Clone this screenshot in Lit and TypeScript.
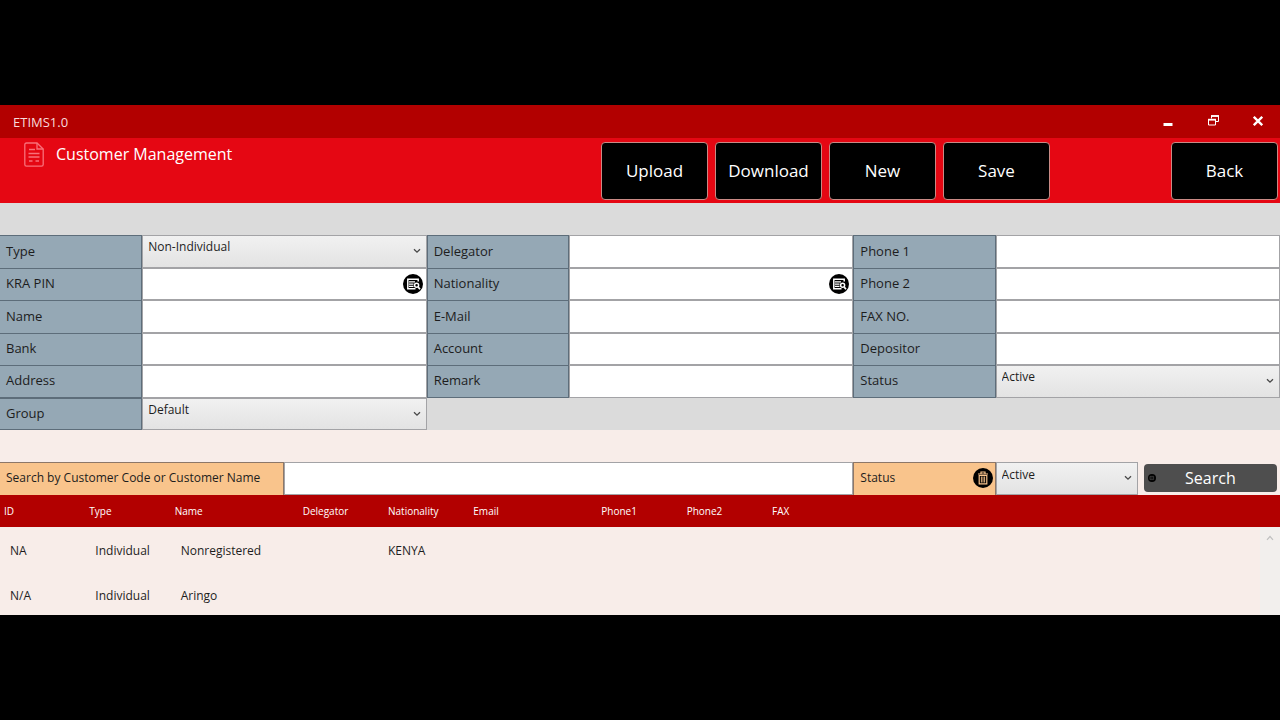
import { LitElement, html, css, nothing, type TemplateResult } from "lit";
import { customElement } from "lit/decorators.js";

interface Field {
  id: string;
  label: string;
  options?: string[];
  lookup?: boolean;
}

const FIELD_ROWS: Field[][] = [
  [
    { id: "type", label: "Type", options: ["Non-Individual", "Individual"] },
    { id: "delegator", label: "Delegator" },
    { id: "phone1", label: "Phone 1" },
  ],
  [
    { id: "pin", label: "KRA PIN", lookup: true },
    { id: "nationality", label: "Nationality", lookup: true },
    { id: "phone2", label: "Phone 2" },
  ],
  [
    { id: "name", label: "Name" },
    { id: "email", label: "E-Mail" },
    { id: "fax", label: "FAX NO." },
  ],
  [
    { id: "bank", label: "Bank" },
    { id: "account", label: "Account" },
    { id: "depositor", label: "Depositor" },
  ],
  [
    { id: "address", label: "Address" },
    { id: "remark", label: "Remark" },
    { id: "status", label: "Status", options: ["Active", "Inactive"] },
  ],
  [{ id: "group", label: "Group", options: ["Default"] }],
];

const COLUMNS = ["ID", "Type", "Name", "Delegator", "Nationality", "Email", "Phone1", "Phone2", "FAX"];
const CUSTOMERS = [
  ["NA", "Individual", "Nonregistered", "", "KENYA", "", "", "", ""],
  ["N/A", "Individual", "Aringo", "", "", "", "", "", ""],
];

const chevron = html`<svg class="chevron" viewBox="0 0 8 6" width="8" height="6" aria-hidden="true">
  <path d="M1 1.2 4 4.2 7 1.2" fill="none" stroke="#484848" stroke-width="1.3" />
</svg>`;

const lookupIcon = html`<svg viewBox="0 0 20 20" width="20" height="20" aria-hidden="true">
  <circle cx="10" cy="10" r="10" fill="#000" />
  <g fill="none" stroke="#fff" stroke-width="1.5">
    <path d="M15.2 7.5V5.2H4.8V14.8H12.5" />
    <path d="M6 7.8H12M6 10.1H10.5M6 12.4H10.5" stroke-width="1.2" />
    <circle cx="13.6" cy="11.2" r="2" />
    <path d="M15.2 13.1 17 15.2" stroke-width="1.7" />
  </g>
</svg>`;

const trashIcon = html`<svg viewBox="0 0 20 20" width="20" height="20" aria-hidden="true">
  <circle cx="10" cy="10" r="10" fill="#000" />
  <g fill="none" stroke="#f9c48c">
    <path d="M5 6H15M8 5.5V4H12V5.5" stroke-width="1.2" />
    <path d="M6.2 7.5V15.8H13.8V7.5Z" stroke-width="1.2" />
    <path d="M8.4 8.5V14.5M10 8.5V14.5M11.6 8.5V14.5" stroke-width="0.9" />
  </g>
</svg>`;

@customElement("app-root")
export class AppRoot extends LitElement {
  static styles = css`
    :host {
      display: flex;
      flex-direction: column;
      justify-content: center;
      min-height: 100vh;
      background: #000;
      font: 13px/18px "Open Sans", "Noto Sans", sans-serif;
      color: #1d1d1d;
    }
    * {
      box-sizing: border-box;
    }
    button,
    input,
    select {
      font: inherit;
      color: inherit;
      margin: 0;
      border-radius: 0;
    }
    button {
      padding: 0;
      border: 0;
      background: none;
    }
    svg {
      display: block;
    }
    .window {
      background: #f8ede9;
    }
    .titlebar {
      display: flex;
      align-items: center;
      height: 33px;
      padding: 0 13px;
      background: #b20000;
      color: #f8dcdc;
    }
    .app-name {
      flex: 1;
    }
    .controls {
      display: flex;
      gap: 27px;
      padding-bottom: 2px;
    }
    .controls button {
      display: grid;
      place-items: center;
      width: 18px;
      height: 18px;
    }
    .toolbar {
      display: flex;
      height: 65px;
      padding: 4px 2px 3px 24px;
      background: #e50713;
      color: #fff;
    }
    .heading {
      display: flex;
      flex: 1;
      align-items: flex-start;
      gap: 12px;
    }
    h1 {
      margin: 0;
      font-size: 16px;
      font-weight: 400;
      line-height: 24px;
    }
    .actions {
      display: flex;
      gap: 7px;
    }
    .action {
      width: 107px;
      border: 1px solid #c98a85;
      border-radius: 4px;
      background: #000;
      font-size: 17px;
    }
    .back {
      margin-left: 114px;
    }
    .form {
      padding-top: 32px;
      background: #dbdbdb;
    }
    .fields {
      display: grid;
      grid-template-columns: repeat(3, minmax(0, 1fr) minmax(0, 2fr));
      grid-template-rows: repeat(6, 1fr);
      height: 195px;
    }
    .label {
      display: flex;
      align-items: center;
      justify-content: space-between;
      padding: 0 2px 2px 6px;
      border: solid #5d6d7a;
      border-width: 1px 1px 0 0;
      background: #95a8b5;
      white-space: nowrap;
    }
    .inner {
      border-left-width: 1px;
    }
    .last {
      border-bottom-width: 1px;
    }
    .cell {
      position: relative;
      display: flex;
    }
    .input,
    .select {
      flex: 1;
      min-width: 0;
      border: 1px solid #a3a3a6;
      outline: 0;
    }
    .input {
      padding: 0 30px 0 5px;
      background: #fff;
    }
    .select {
      appearance: none;
      padding: 0 20px 8px 5px;
      background: linear-gradient(#f1f1f1, #e3e3e3);
      font-size: 12px;
    }
    .chevron {
      position: absolute;
      right: 6px;
      top: 13px;
      pointer-events: none;
    }
    .lookup {
      position: absolute;
      right: 4px;
      top: 6px;
    }
    .search {
      display: grid;
      grid-template-columns: minmax(0, 2fr) minmax(0, 4fr) repeat(3, minmax(0, 1fr));
      height: 33px;
      margin-top: 32px;
    }
    .search .label {
      border-color: #8d7768;
      background: #f9c48c;
      font-size: 12px;
    }
    .search-button {
      display: grid;
      grid-template-columns: 8px 1fr 8px;
      align-items: center;
      margin: 2px 3px 3px 6px;
      padding: 0 4px;
      border-radius: 4px;
      background: #4e4e4e;
      color: #fff;
      font-size: 16px;
    }
    .results {
      position: relative;
      height: 120px;
      overflow: hidden;
    }
    table {
      width: 100%;
      border-collapse: collapse;
      table-layout: fixed;
      font-size: 12px;
    }
    .col {
      width: calc(100% / 15);
    }
    .col-wide {
      width: 10%;
    }
    .col-rest {
      width: auto;
    }
    th {
      height: 32px;
      padding: 0 4px;
      background: #b20000;
      color: #fff;
      font-size: 10px;
      font-weight: 400;
      text-align: left;
    }
    td {
      height: 45px;
      padding: 2px 4px 0;
      white-space: nowrap;
    }
    td:nth-child(-n + 3) {
      padding-left: 10px;
    }
    .scrollbar {
      position: absolute;
      top: 32px;
      right: 0;
      bottom: 0;
      display: flex;
      justify-content: center;
      width: 20px;
      padding-top: 8px;
      background: #f2efed;
    }
  `;

  private control(field: Field): TemplateResult {
    return html`<div class="cell">
      ${field.options
        ? html`<select class="select" id=${field.id}>
              ${field.options.map((o) => html`<option>${o}</option>`)}
            </select>
            ${chevron}`
        : html`<input class="input" id=${field.id} type="text" />`}
      ${field.lookup
        ? html`<button class="lookup" type="button" aria-label="Look up ${field.label}">${lookupIcon}</button>`
        : nothing}
    </div>`;
  }

  render() {
    return html`
      <main class="window">
        <header class="titlebar">
          <span class="app-name">ETIMS1.0</span>
          <div class="controls">
            <button type="button" aria-label="Minimize">
              <svg viewBox="0 0 10 10" width="10" height="10"><path d="M0.5 7H9.5V10H0.5Z" fill="#fff" /></svg>
            </button>
            <button type="button" aria-label="Restore">
              <svg viewBox="0 0 11 11" width="11" height="11">
                <g fill="none" stroke="#fff">
                  <path d="M3.5 3.5V1H10.5V6.5H8" />
                  <path d="M3 1H11" stroke-width="1.8" />
                  <path d="M0.5 4.5H7.5V10H0.5Z" />
                  <path d="M0 4.7H8" stroke-width="1.8" />
                </g>
              </svg>
            </button>
            <button type="button" aria-label="Close">
              <svg viewBox="0 0 10 10" width="10" height="10">
                <path d="M0.8 0.8 9.2 9.2M9.2 0.8 0.8 9.2" stroke="#fff" stroke-width="2.3" />
              </svg>
            </button>
          </div>
        </header>
        <div class="toolbar">
          <div class="heading">
            <svg viewBox="0 0 20 26" width="20" height="26" aria-hidden="true">
              <g fill="none" stroke="#f8707a" stroke-width="1.3">
                <path d="M13 1H2.5Q0.8 1 0.8 2.7V22.5Q0.8 24.2 2.5 24.2H17.5Q19.2 24.2 19.2 22.5V7Z" />
                <path d="M13 1V7H19.2M5 7.5H11M4.5 11.5H15.5M4.5 15H15.5M5 19H8.5M11.5 19H15" />
              </g>
            </svg>
            <h1>Customer Management</h1>
          </div>
          <div class="actions">
            <button class="action" type="button">Upload</button>
            <button class="action" type="button">Download</button>
            <button class="action" type="button">New</button>
            <button class="action" type="button">Save</button>
            <button class="action back" type="button">Back</button>
          </div>
        </div>
        <form class="form">
          <div class="fields">
            ${FIELD_ROWS.map((row, i) =>
              row.map(
                (field, j) => html`<label
                    class="label ${j > 0 ? "inner" : ""} ${i > 3 ? "last" : ""}"
                    for=${field.id}
                    >${field.label}</label
                  >
                  ${this.control(field)}`
              )
            )}
          </div>
        </form>
        <form class="search">
          <label class="label" for="query">Search by Customer Code or Customer Name</label>
          <div class="cell"><input class="input" id="query" type="text" /></div>
          <div class="label inner">
            <label for="filter">Status</label>
            <button type="button" aria-label="Clear search">${trashIcon}</button>
          </div>
          <div class="cell">
            <select class="select" id="filter">
              <option>Active</option>
              <option>Inactive</option>
            </select>
            ${chevron}
          </div>
          <button class="search-button" type="button">
            <svg viewBox="0 0 20 20" width="8" height="8" aria-hidden="true">
              <circle cx="10" cy="10" r="10" fill="#000" />
              <path d="M5 6H14V14H5ZM6 10H12" fill="none" stroke="#555" stroke-width="1.5" />
            </svg>
            <span>Search</span>
          </button>
        </form>
        <section class="results">
          <table>
            <colgroup>
              ${COLUMNS.map(
                (c) =>
                  html`<col class=${c === "Name" || c === "Email" ? "col-wide" : c === "FAX" ? "col-rest" : "col"} />`
              )}
            </colgroup>
            <thead>
              <tr>
                ${COLUMNS.map((c) => html`<th scope="col">${c}</th>`)}
              </tr>
            </thead>
            <tbody>
              ${CUSTOMERS.map((row) => html`<tr>${row.map((v) => html`<td>${v}</td>`)}</tr>`)}
            </tbody>
          </table>
          <div class="scrollbar">
            <svg viewBox="0 0 8 6" width="8" height="6" aria-hidden="true">
              <path d="M1 4.8 4 1.5 7 4.8" fill="none" stroke="#c0c0c0" stroke-width="1.2" />
            </svg>
          </div>
        </section>
      </main>
    `;
  }
}
